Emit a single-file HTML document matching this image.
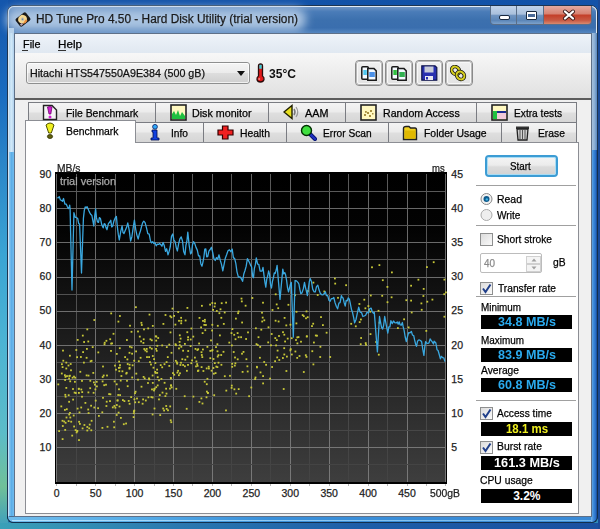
<!DOCTYPE html>
<html><head><meta charset="utf-8">
<style>
*{box-sizing:border-box;margin:0;padding:0}
html,body{width:600px;height:529px;overflow:hidden}
body{position:relative;font-family:"Liberation Sans",sans-serif;font-size:11px;color:#000;
 background:linear-gradient(180deg,#1556ac 0%,#1d66b8 30%,#2f86c4 60%,#3aa0cc 80%,#2a6fa0 100%)}
.a{position:absolute}
.t{white-space:nowrap;line-height:1;-webkit-text-stroke:0.25px currentColor}
</style></head><body>

<div class="a" style="left:0px;top:0px;width:600px;height:529px;background:linear-gradient(180deg,#1252a8 0%,#1860b4 25%,#2a88c4 55%,#3eaad2 75%,#2f8cb8 100%)"></div>
<div class="a" style="left:0px;top:0px;width:8px;height:529px;background:linear-gradient(180deg,#1456ac 0%,#1a6cc0 18%,#2a84c8 30%,#3aa4d4 48%,#4cb4d4 65%,#5cbcc8 82%,#70c098 92%,#3a9cc0 100%)"></div>
<div class="a" style="left:0px;top:523px;width:600px;height:6px;background:linear-gradient(90deg,#3aa0b8 0%,#2a78b0 30%,#1d5ea8 60%,#1a50a0 100%)"></div>
<div class="a" style="left:598px;top:0px;width:2px;height:529px;background:#1a4a98"></div>
<div class="a" style="left:7px;top:5px;width:591px;height:518px;border-radius:7px;border:1px solid #1e3550;background:linear-gradient(180deg,#b8cfe8 0%,#a8c2e0 6%,#a4c4e4 20%,#80b8ea 40%,#5eaeea 100%)"></div>
<div class="a" style="left:8px;top:6px;width:589px;height:516px;border-radius:6px;border:1px solid rgba(255,255,255,0.6);border-bottom-color:rgba(255,255,255,0.3)"></div>
<div class="a" style="left:9px;top:33px;width:5px;height:119px;background:linear-gradient(90deg,#b8d8f0,#d0e8f8 50%,#b0d0ec)"></div>
<div class="a" style="left:9px;top:152px;width:5px;height:364px;background:linear-gradient(90deg,#8cc8f0,#5caee8 50%,#70bcee)"></div>
<div class="a" style="left:591px;top:33px;width:6px;height:117px;background:linear-gradient(90deg,#b0c8e0,#8aaed4 60%,#5a88c0)"></div>
<div class="a" style="left:7px;top:516px;width:585px;height:7px;border-radius:0 0 0 6px;border:1px solid #12304e;border-top:none;border-right:none;background:linear-gradient(90deg,#70bcec 0%,#58aee8 20%,#3a90da 45%,#3a8ad6 100%)"></div>
<div class="a" style="left:12px;top:520px;width:580px;height:1px;background:linear-gradient(90deg,rgba(200,235,255,0.8),rgba(150,210,245,0.6))"></div>
<div class="a" style="left:9px;top:516px;width:583px;height:1px;background:#4a6c8e"></div>
<div class="a" style="left:591px;top:150px;width:7px;height:373px;background:linear-gradient(90deg,#7ab4e8,#3a88d8 45%,#2a70c8 75%,#1a4890);border-radius:0 0 6px 0;border-right:1px solid #12304e;border-bottom:1px solid #12304e"></div>
<div class="a" style="left:9px;top:7px;width:587px;height:26px;border-radius:5px 5px 0 0;background:linear-gradient(180deg,#6e94c4 0%,#4a7cb8 18%,#3c70ae 50%,#3a6eae 80%,#5486c0 100%)"></div>
<div class="a" style="left:6px;top:8px;width:300px;height:23px;border-radius:11px;background:rgba(176,200,228,0.95);filter:blur(5px)"></div>
<div class="a" style="left:9px;top:28px;width:5px;height:5px;background:#b8d2ea"></div>
<svg class="a" style="left:14px;top:11px;" width="18" height="17" viewBox="0 0 18 17"><g transform="rotate(-38 9 8.5)"><rect x="2.5" y="3.5" width="13" height="10" rx="1.8" fill="#1a1a1a"/><ellipse cx="8.8" cy="8" rx="4.6" ry="4.2" fill="#f6d890"/><circle cx="8.8" cy="8" r="1.8" fill="#c8c0a8"/><circle cx="8.8" cy="8" r="0.8" fill="#6a88a8"/><path d="M6 12 Q9 13.5 12 12 L11 10 Z" fill="#f09040"/><rect x="3.5" y="10.5" width="2.5" height="2" fill="#b8a0b0"/></g></svg>
<div class="a t" style="left:35.50px;top:13.44px;font-size:12px;color:#1b1b1b;transform:scaleX(0.9896);transform-origin:0 0;">HD Tune Pro 4.50 - Hard Disk Utility (trial version)</div>
<div class="a" style="left:490px;top:6px;width:102px;height:19px;border:1px solid #5a6e88;border-top:none;border-radius:0 0 4px 4px;overflow:hidden"><div class="a" style="left:0;top:0;width:26px;height:18px;background:linear-gradient(180deg,#c2d4ea 0%,#aac0dc 45%,#7094c0 52%,#5c86b8 80%,#7ea2cc 100%);border-right:1px solid #5a6e88"></div><div class="a" style="left:26px;top:0;width:27px;height:18px;background:linear-gradient(180deg,#c2d4ea 0%,#aac0dc 45%,#7094c0 52%,#5c86b8 80%,#7ea2cc 100%);border-right:1px solid #5a6e88"></div><div class="a" style="left:53px;top:0;width:47px;height:18px;background:linear-gradient(180deg,#e4aaa0 0%,#d88474 42%,#c4402a 52%,#c85a44 80%,#d88a70 100%)"></div></div>
<div class="a" style="left:499px;top:15px;width:11px;height:5px;background:#fff;border:1px solid #1a2a40;border-radius:2px"></div>
<div class="a" style="left:526px;top:11px;width:11px;height:9px;border:1px solid #1a2a40;background:#fff;border-radius:1px"></div>
<div class="a" style="left:528px;top:14px;width:7px;height:3px;background:#4a6a98"></div>
<svg class="a" style="left:562px;top:9px;" width="14" height="12" viewBox="0 0 14 12"><path d="M3 2.5 L11 9.5 M11 2.5 L3 9.5" stroke="#3a1a1a" stroke-width="4" stroke-linecap="round"/><path d="M3 2.5 L11 9.5 M11 2.5 L3 9.5" stroke="#fff" stroke-width="2.3" stroke-linecap="round"/></svg>
<div class="a" style="left:14px;top:33px;width:578px;height:484px;background:#f0f0f0;border:1px solid #5e7088"></div>
<div class="a" style="left:15px;top:34px;width:576px;height:19px;background:linear-gradient(180deg,#eef3f9,#e0e8f1)"></div>
<div class="a" style="left:15px;top:53px;width:576px;height:45px;background:linear-gradient(180deg,#f7f7f7,#e0e0e0)"></div>
<div class="a" style="left:15px;top:98px;width:576px;height:2px;background:#5c5c5c"></div>
<div class="a" style="left:15px;top:100px;width:576px;height:416px;background:#f0f0f0"></div>
<div class="a t" style="left:22.50px;top:38.99px;font-size:11px;color:#000;transform:scaleX(0.9873);transform-origin:0 0;">File</div>
<div class="a" style="left:22px;top:50px;width:6px;height:1px;background:#333"></div>
<div class="a t" style="left:58.30px;top:38.99px;font-size:11px;color:#000;transform:scaleX(1.0608);transform-origin:0 0;">Help</div>
<div class="a" style="left:58px;top:50px;width:8px;height:1px;background:#333"></div>
<div class="a" style="left:26px;top:62px;width:224px;height:22px;border:1px solid #8e8f8f;border-radius:3px;background:linear-gradient(180deg,#f4f4f4 0%,#ebebeb 50%,#dddddd 51%,#cfcfcf 100%)"></div>
<div class="a" style="left:27px;top:63px;width:222px;height:20px;border:1px solid rgba(255,255,255,0.7);border-radius:2px"></div>
<div class="a t" style="left:30.00px;top:68.09px;font-size:11px;color:#111;transform:scaleX(0.9734);transform-origin:0 0;">Hitachi HTS547550A9E384 (500 gB)</div>
<svg class="a" style="left:237px;top:71px;" width="9" height="5" viewBox="0 0 9 5"><path d="M0 0 H8 L4 5 Z" fill="#111"/></svg>
<svg class="a" style="left:254px;top:63px;" width="13" height="20" viewBox="0 0 13 20"><path d="M4.5 3 Q4.5 1 6.5 1 Q8.5 1 8.5 3 V13 Q10.5 14.5 10 16.5 Q9.3 19 6.5 19 Q3.5 19 3 16.5 Q2.6 14.5 4.5 13 Z" fill="#e01818" stroke="#2a0a0a" stroke-width="1.3"/><rect x="5.3" y="1.8" width="2.4" height="4" fill="#38d0d8"/><circle cx="5.2" cy="16" r="1" fill="#f08080"/></svg>
<div class="a t" style="left:269.00px;top:68.44px;font-size:12px;font-weight:bold;-webkit-text-stroke:0;color:#111;transform:scaleX(1.0070);transform-origin:0 0;">35°C</div>
<div class="a" style="left:355px;top:60px;width:28px;height:26px;border:1px solid #8a8a8a;border-radius:4px;background:linear-gradient(180deg,#f0f0f0,#e2e2e2)"></div>
<div class="a" style="left:356px;top:61px;width:26px;height:24px;border:1px solid #b8b8b8;border-radius:3px"></div>
<div class="a" style="left:357px;top:62px;width:24px;height:22px;border:1px solid #f8f8f8;border-radius:2px"></div>
<svg class="a" style="left:361px;top:66px;" width="17" height="17" viewBox="0 0 17 17"><rect x="0.8" y="0.8" width="6.5" height="12.5" rx="1" fill="#f4faff" stroke="#1a1a1a" stroke-width="1.5"/><rect x="2.3" y="4" width="3.5" height="5" fill="#50c8f0"/><path d="M6.8 2.6 H13 L15.2 4.8 V14.2 H6.8 Z" fill="#f4faff" stroke="#1a1a1a" stroke-width="1.5"/><rect x="8.3" y="6" width="5.5" height="5" fill="#4a90e8"/></svg>
<div class="a" style="left:385px;top:60px;width:28px;height:26px;border:1px solid #8a8a8a;border-radius:4px;background:linear-gradient(180deg,#f0f0f0,#e2e2e2)"></div>
<div class="a" style="left:386px;top:61px;width:26px;height:24px;border:1px solid #b8b8b8;border-radius:3px"></div>
<div class="a" style="left:387px;top:62px;width:24px;height:22px;border:1px solid #f8f8f8;border-radius:2px"></div>
<svg class="a" style="left:391px;top:66px;" width="17" height="17" viewBox="0 0 17 17"><rect x="0.8" y="0.8" width="6.5" height="12.5" rx="1" fill="#f4faff" stroke="#1a1a1a" stroke-width="1.5"/><rect x="2.3" y="4" width="3.5" height="5" fill="#30c040"/><path d="M6.8 2.6 H13 L15.2 4.8 V14.2 H6.8 Z" fill="#f4faff" stroke="#1a1a1a" stroke-width="1.5"/><rect x="8.3" y="6" width="5.5" height="5" fill="#30b050"/></svg>
<div class="a" style="left:415px;top:60px;width:28px;height:26px;border:1px solid #8a8a8a;border-radius:4px;background:linear-gradient(180deg,#f0f0f0,#e2e2e2)"></div>
<div class="a" style="left:416px;top:61px;width:26px;height:24px;border:1px solid #b8b8b8;border-radius:3px"></div>
<div class="a" style="left:417px;top:62px;width:24px;height:22px;border:1px solid #f8f8f8;border-radius:2px"></div>
<svg class="a" style="left:421px;top:65px;" width="17" height="17" viewBox="0 0 17 17"><path d="M0.8 0.8 H14 L15.8 2.6 V15.2 H0.8 Z" fill="#2830b0" stroke="#10164a" stroke-width="1.2"/><rect x="3.5" y="1.5" width="9" height="6" fill="#c8ccd8"/><rect x="4" y="11" width="8" height="4" fill="#e8e8f0"/><rect x="5" y="12" width="2" height="2.5" fill="#2830b0"/></svg>
<div class="a" style="left:445px;top:60px;width:28px;height:26px;border:1px solid #8a8a8a;border-radius:4px;background:linear-gradient(180deg,#f0f0f0,#e2e2e2)"></div>
<div class="a" style="left:446px;top:61px;width:26px;height:24px;border:1px solid #b8b8b8;border-radius:3px"></div>
<div class="a" style="left:447px;top:62px;width:24px;height:22px;border:1px solid #f8f8f8;border-radius:2px"></div>
<svg class="a" style="left:450px;top:65px;" width="17" height="17" viewBox="0 0 17 17"><g transform="rotate(-45 8 8)"><ellipse cx="8" cy="4.5" rx="3.6" ry="4.2" fill="none" stroke="#1a1a10" stroke-width="3.6"/><ellipse cx="8" cy="4.5" rx="3.6" ry="4.2" fill="none" stroke="#d8d020" stroke-width="2"/><ellipse cx="8" cy="11.5" rx="3.6" ry="4.2" fill="none" stroke="#1a1a10" stroke-width="3.6"/><ellipse cx="8" cy="11.5" rx="3.6" ry="4.2" fill="none" stroke="#d8d020" stroke-width="2"/></g></svg>
<div class="a" style="left:28px;top:102px;width:128px;height:21px;background:linear-gradient(180deg,#f4f4f4 0%,#ececec 45%,#dedede 55%,#d6d6d6 100%);border:1px solid #7a7c82;"></div>
<div class="a" style="left:155px;top:102px;width:114px;height:21px;background:linear-gradient(180deg,#f4f4f4 0%,#ececec 45%,#dedede 55%,#d6d6d6 100%);border:1px solid #7a7c82;"></div>
<div class="a" style="left:268px;top:102px;width:78px;height:21px;background:linear-gradient(180deg,#f4f4f4 0%,#ececec 45%,#dedede 55%,#d6d6d6 100%);border:1px solid #7a7c82;"></div>
<div class="a" style="left:345px;top:102px;width:132px;height:21px;background:linear-gradient(180deg,#f4f4f4 0%,#ececec 45%,#dedede 55%,#d6d6d6 100%);border:1px solid #7a7c82;"></div>
<div class="a" style="left:476px;top:102px;width:101px;height:21px;background:linear-gradient(180deg,#f4f4f4 0%,#ececec 45%,#dedede 55%,#d6d6d6 100%);border:1px solid #7a7c82;"></div>
<div class="a" style="left:135px;top:122px;width:69px;height:21px;background:linear-gradient(180deg,#f4f4f4 0%,#ececec 45%,#dedede 55%,#d6d6d6 100%);border:1px solid #7a7c82;"></div>
<div class="a" style="left:203px;top:122px;width:84px;height:21px;background:linear-gradient(180deg,#f4f4f4 0%,#ececec 45%,#dedede 55%,#d6d6d6 100%);border:1px solid #7a7c82;"></div>
<div class="a" style="left:286px;top:122px;width:103px;height:21px;background:linear-gradient(180deg,#f4f4f4 0%,#ececec 45%,#dedede 55%,#d6d6d6 100%);border:1px solid #7a7c82;"></div>
<div class="a" style="left:388px;top:122px;width:114px;height:21px;background:linear-gradient(180deg,#f4f4f4 0%,#ececec 45%,#dedede 55%,#d6d6d6 100%);border:1px solid #7a7c82;"></div>
<div class="a" style="left:501px;top:122px;width:76px;height:21px;background:linear-gradient(180deg,#f4f4f4 0%,#ececec 45%,#dedede 55%,#d6d6d6 100%);border:1px solid #7a7c82;"></div>
<div class="a" style="left:25px;top:142px;width:554px;height:372px;background:#fff;border:1px solid #8c8e94"></div>
<div class="a" style="left:25px;top:120px;width:111px;height:23px;background:#fff;border:1px solid #8c8e94;border-bottom:none"></div>
<div class="a t" style="left:65.50px;top:107.99px;font-size:11px;color:#000;transform:scaleX(0.9461);transform-origin:0 0;">File Benchmark</div>
<div class="a t" style="left:192.30px;top:107.99px;font-size:11px;color:#000;transform:scaleX(0.9734);transform-origin:0 0;">Disk monitor</div>
<div class="a t" style="left:305.00px;top:107.99px;font-size:11px;color:#000;transform:scaleX(0.9816);transform-origin:0 0;">AAM</div>
<div class="a t" style="left:383.00px;top:107.99px;font-size:11px;color:#000;transform:scaleX(0.9650);transform-origin:0 0;">Random Access</div>
<div class="a t" style="left:513.50px;top:107.99px;font-size:11px;color:#000;transform:scaleX(0.9257);transform-origin:0 0;">Extra tests</div>
<div class="a t" style="left:65.50px;top:126.19px;font-size:11px;color:#000;transform:scaleX(0.9436);transform-origin:0 0;">Benchmark</div>
<div class="a t" style="left:170.50px;top:127.99px;font-size:11px;color:#000;transform:scaleX(0.9265);transform-origin:0 0;">Info</div>
<div class="a t" style="left:240.00px;top:127.99px;font-size:11px;color:#000;transform:scaleX(0.9435);transform-origin:0 0;">Health</div>
<div class="a t" style="left:323.00px;top:127.99px;font-size:11px;color:#000;transform:scaleX(0.9244);transform-origin:0 0;">Error Scan</div>
<div class="a t" style="left:424.00px;top:127.99px;font-size:11px;color:#000;transform:scaleX(0.9480);transform-origin:0 0;">Folder Usage</div>
<div class="a t" style="left:537.60px;top:127.99px;font-size:11px;color:#000;transform:scaleX(0.9361);transform-origin:0 0;">Erase</div>
<svg class="a" style="left:42px;top:104px;" width="16" height="17" viewBox="0 0 16 17"><path d="M1.5 1.5 H10 L14.5 6 V15.5 H1.5 Z" fill="#f4f4f4" stroke="#222" stroke-width="1.4"/><path d="M5.5 3 Q8 2 10 3 L8.8 10 H7 Z" fill="#d020d0" stroke="#700070" stroke-width="0.8"/><circle cx="8" cy="13" r="1.5" fill="#d020d0"/></svg>
<svg class="a" style="left:45px;top:122px;" width="10" height="18" viewBox="0 0 10 18"><path d="M1 3 Q5 -1 9 3 L6.3 11 H3.7 Z" fill="#f0f020" stroke="#505000" stroke-width="1"/><ellipse cx="5" cy="14.5" rx="2.6" ry="2" fill="#606010" stroke="#303000" stroke-width="0.8"/></svg>
<svg class="a" style="left:170px;top:104px;" width="17" height="17" viewBox="0 0 17 17"><rect x="1" y="1" width="15" height="15" fill="#fff8c0" stroke="#222" stroke-width="1.6"/><path d="M2 15 V10 L4 7 L6 11 L8 6 L10 12 L12 8 L15 12 V15 Z" fill="#20c040"/></svg>
<svg class="a" style="left:150px;top:124px;" width="10" height="17" viewBox="0 0 10 17"><circle cx="5" cy="2.8" r="2.4" fill="#30a8f8" stroke="#001860" stroke-width="0.8"/><path d="M2 6 H7 V14 H9 V16 H1 V14 H3 V8 H2 Z" fill="#1040e0" stroke="#001050" stroke-width="0.8"/></svg>
<svg class="a" style="left:217px;top:125px;" width="17" height="15" viewBox="0 0 17 15"><path d="M5.5 1 H11 V5 H16 V10 H11 V14 H5.5 V10 H1 V5 H5.5 Z" fill="#f02020" stroke="#300000" stroke-width="1.2"/></svg>
<svg class="a" style="left:283px;top:104px;" width="17" height="16" viewBox="0 0 17 16"><path d="M1 8 L9 1.5 V14.5 Z" fill="#e8e020" stroke="#202000" stroke-width="1.4"/><path d="M11 5 Q13 8 11 11" stroke="#777" stroke-width="1.5" fill="none"/><path d="M13 3 Q16.5 8 13 13" stroke="#999" stroke-width="1.2" fill="none"/></svg>
<svg class="a" style="left:300px;top:124px;" width="17" height="17" viewBox="0 0 17 17"><path d="M9 9 L15 15" stroke="#001070" stroke-width="4" stroke-linecap="round"/><path d="M9 9 L15 15" stroke="#2030c0" stroke-width="2.4" stroke-linecap="round"/><circle cx="6.5" cy="6.5" r="5" fill="#40e040" stroke="#003000" stroke-width="1.4"/></svg>
<svg class="a" style="left:360px;top:104px;" width="17" height="17" viewBox="0 0 17 17"><rect x="1" y="1" width="15" height="15" fill="#fff8c0" stroke="#222" stroke-width="1.6"/><g fill="#a89040"><rect x="4" y="10" width="2" height="2"/><rect x="7" y="8" width="2" height="2"/><rect x="10" y="6" width="2" height="2"/><rect x="5" y="7" width="1.8" height="1.8"/><rect x="9" y="11" width="2" height="2"/><rect x="12" y="9" width="1.5" height="1.5"/></g></svg>
<svg class="a" style="left:402px;top:125px;" width="16" height="16" viewBox="0 0 16 16"><path d="M1.5 3.5 Q1.5 1.5 4 1.5 H7 L8.5 3 H13 Q14.5 3 14.5 5 V14.5 H1.5 Z" fill="#f0d020" stroke="#222" stroke-width="1.4"/><rect x="3" y="5.5" width="10" height="8" fill="#e0b800"/></svg>
<svg class="a" style="left:491px;top:104px;" width="17" height="17" viewBox="0 0 17 17"><rect x="1" y="1" width="15" height="15" fill="#fff8c0" stroke="#222" stroke-width="1.6"/><rect x="2" y="7" width="4" height="8" fill="#20c040"/><rect x="6" y="7" width="9" height="2" fill="#1a2a90"/><rect x="6" y="9" width="9" height="6" fill="#f0c8d8"/></svg>
<svg class="a" style="left:515px;top:125px;" width="15" height="16" viewBox="0 0 15 16"><path d="M1 1.5 H14 V4 H1 Z" fill="#333"/><path d="M2 4 H13 L12 15 H3 Z" fill="#cfcfcf" stroke="#222" stroke-width="1.3"/><path d="M5 5 V14 M7.5 5 V14 M10 5 V14" stroke="#555" stroke-width="1"/></svg>
<svg class="a" style="left:0px;top:0px;" width="600" height="529" viewBox="0 0 600 529"><defs><linearGradient id="bg" x1="0" y1="0" x2="0" y2="1"><stop offset="0" stop-color="#000"/><stop offset="0.18" stop-color="#030303"/><stop offset="1" stop-color="#3e3e3e"/></linearGradient></defs><rect x="55" y="172" width="392" height="312" fill="#000"/><rect x="57" y="174" width="389" height="308" fill="url(#bg)"/><defs><linearGradient id="gmin" gradientUnits="userSpaceOnUse" x1="0" y1="174" x2="0" y2="482"><stop offset="0" stop-color="#5a5a5a"/><stop offset="1" stop-color="#434343"/></linearGradient><linearGradient id="gmaj" gradientUnits="userSpaceOnUse" x1="0" y1="174" x2="0" y2="482"><stop offset="0" stop-color="#666"/><stop offset="1" stop-color="#787878"/></linearGradient></defs><line x1="56.5" y1="174" x2="56.5" y2="482" stroke="url(#gmaj)" stroke-width="1"/><line x1="76.5" y1="174" x2="76.5" y2="482" stroke="url(#gmin)" stroke-width="1"/><line x1="95.5" y1="174" x2="95.5" y2="482" stroke="url(#gmaj)" stroke-width="1"/><line x1="115.5" y1="174" x2="115.5" y2="482" stroke="url(#gmin)" stroke-width="1"/><line x1="134.5" y1="174" x2="134.5" y2="482" stroke="url(#gmaj)" stroke-width="1"/><line x1="154.5" y1="174" x2="154.5" y2="482" stroke="url(#gmin)" stroke-width="1"/><line x1="173.5" y1="174" x2="173.5" y2="482" stroke="url(#gmaj)" stroke-width="1"/><line x1="192.5" y1="174" x2="192.5" y2="482" stroke="url(#gmin)" stroke-width="1"/><line x1="212.5" y1="174" x2="212.5" y2="482" stroke="url(#gmaj)" stroke-width="1"/><line x1="231.5" y1="174" x2="231.5" y2="482" stroke="url(#gmin)" stroke-width="1"/><line x1="251.5" y1="174" x2="251.5" y2="482" stroke="url(#gmaj)" stroke-width="1"/><line x1="270.5" y1="174" x2="270.5" y2="482" stroke="url(#gmin)" stroke-width="1"/><line x1="290.5" y1="174" x2="290.5" y2="482" stroke="url(#gmaj)" stroke-width="1"/><line x1="309.5" y1="174" x2="309.5" y2="482" stroke="url(#gmin)" stroke-width="1"/><line x1="329.5" y1="174" x2="329.5" y2="482" stroke="url(#gmaj)" stroke-width="1"/><line x1="348.5" y1="174" x2="348.5" y2="482" stroke="url(#gmin)" stroke-width="1"/><line x1="368.5" y1="174" x2="368.5" y2="482" stroke="url(#gmaj)" stroke-width="1"/><line x1="387.5" y1="174" x2="387.5" y2="482" stroke="url(#gmin)" stroke-width="1"/><line x1="407.5" y1="174" x2="407.5" y2="482" stroke="url(#gmaj)" stroke-width="1"/><line x1="426.5" y1="174" x2="426.5" y2="482" stroke="url(#gmin)" stroke-width="1"/><line x1="445.5" y1="174" x2="445.5" y2="482" stroke="url(#gmaj)" stroke-width="1"/><line x1="57" y1="464.5" x2="445" y2="464.5" stroke="#444444" stroke-width="1"/><line x1="57" y1="447.5" x2="445" y2="447.5" stroke="#767676" stroke-width="1"/><line x1="57" y1="430.5" x2="445" y2="430.5" stroke="#474747" stroke-width="1"/><line x1="57" y1="413.5" x2="445" y2="413.5" stroke="#747474" stroke-width="1"/><line x1="57" y1="396.5" x2="445" y2="396.5" stroke="#494949" stroke-width="1"/><line x1="57" y1="379.5" x2="445" y2="379.5" stroke="#727272" stroke-width="1"/><line x1="57" y1="362.5" x2="445" y2="362.5" stroke="#4c4c4c" stroke-width="1"/><line x1="57" y1="345.5" x2="445" y2="345.5" stroke="#707070" stroke-width="1"/><line x1="57" y1="328.5" x2="445" y2="328.5" stroke="#4e4e4e" stroke-width="1"/><line x1="57" y1="311.5" x2="445" y2="311.5" stroke="#6e6e6e" stroke-width="1"/><line x1="57" y1="294.5" x2="445" y2="294.5" stroke="#515151" stroke-width="1"/><line x1="57" y1="277.5" x2="445" y2="277.5" stroke="#6c6c6c" stroke-width="1"/><line x1="57" y1="259.5" x2="445" y2="259.5" stroke="#545454" stroke-width="1"/><line x1="57" y1="242.5" x2="445" y2="242.5" stroke="#6a6a6a" stroke-width="1"/><line x1="57" y1="225.5" x2="445" y2="225.5" stroke="#565656" stroke-width="1"/><line x1="57" y1="208.5" x2="445" y2="208.5" stroke="#686868" stroke-width="1"/><line x1="57" y1="191.5" x2="445" y2="191.5" stroke="#595959" stroke-width="1"/><line x1="56.5" y1="484" x2="56.5" y2="486" stroke="#b8b8b8" stroke-width="1"/><line x1="76.5" y1="484" x2="76.5" y2="486" stroke="#b8b8b8" stroke-width="1"/><line x1="95.5" y1="484" x2="95.5" y2="486" stroke="#b8b8b8" stroke-width="1"/><line x1="115.5" y1="484" x2="115.5" y2="486" stroke="#b8b8b8" stroke-width="1"/><line x1="134.5" y1="484" x2="134.5" y2="486" stroke="#b8b8b8" stroke-width="1"/><line x1="154.5" y1="484" x2="154.5" y2="486" stroke="#b8b8b8" stroke-width="1"/><line x1="173.5" y1="484" x2="173.5" y2="486" stroke="#b8b8b8" stroke-width="1"/><line x1="192.5" y1="484" x2="192.5" y2="486" stroke="#b8b8b8" stroke-width="1"/><line x1="212.5" y1="484" x2="212.5" y2="486" stroke="#b8b8b8" stroke-width="1"/><line x1="231.5" y1="484" x2="231.5" y2="486" stroke="#b8b8b8" stroke-width="1"/><line x1="251.5" y1="484" x2="251.5" y2="486" stroke="#b8b8b8" stroke-width="1"/><line x1="270.5" y1="484" x2="270.5" y2="486" stroke="#b8b8b8" stroke-width="1"/><line x1="290.5" y1="484" x2="290.5" y2="486" stroke="#b8b8b8" stroke-width="1"/><line x1="309.5" y1="484" x2="309.5" y2="486" stroke="#b8b8b8" stroke-width="1"/><line x1="329.5" y1="484" x2="329.5" y2="486" stroke="#b8b8b8" stroke-width="1"/><line x1="348.5" y1="484" x2="348.5" y2="486" stroke="#b8b8b8" stroke-width="1"/><line x1="368.5" y1="484" x2="368.5" y2="486" stroke="#b8b8b8" stroke-width="1"/><line x1="387.5" y1="484" x2="387.5" y2="486" stroke="#b8b8b8" stroke-width="1"/><line x1="407.5" y1="484" x2="407.5" y2="486" stroke="#b8b8b8" stroke-width="1"/><line x1="426.5" y1="484" x2="426.5" y2="486" stroke="#b8b8b8" stroke-width="1"/><line x1="445.5" y1="484" x2="445.5" y2="486" stroke="#b8b8b8" stroke-width="1"/><g fill="#c8c838"><rect x="232.8" y="351.1" width="1.8" height="1.8"/><rect x="285.4" y="324.5" width="1.8" height="1.8"/><rect x="93.4" y="319.1" width="1.8" height="1.8"/><rect x="296.3" y="357.0" width="1.8" height="1.8"/><rect x="150.9" y="347.8" width="1.8" height="1.8"/><rect x="146.1" y="356.2" width="1.8" height="1.8"/><rect x="386.5" y="286.0" width="1.8" height="1.8"/><rect x="211.4" y="323.9" width="1.8" height="1.8"/><rect x="90.7" y="359.9" width="1.8" height="1.8"/><rect x="152.6" y="366.8" width="1.8" height="1.8"/><rect x="230.9" y="384.7" width="1.8" height="1.8"/><rect x="102.1" y="365.6" width="1.8" height="1.8"/><rect x="175.1" y="344.3" width="1.8" height="1.8"/><rect x="95.8" y="380.9" width="1.8" height="1.8"/><rect x="172.1" y="372.2" width="1.8" height="1.8"/><rect x="201.4" y="356.2" width="1.8" height="1.8"/><rect x="116.7" y="399.4" width="1.8" height="1.8"/><rect x="133.3" y="359.8" width="1.8" height="1.8"/><rect x="97.2" y="407.3" width="1.8" height="1.8"/><rect x="156.8" y="384.5" width="1.8" height="1.8"/><rect x="337.1" y="296.9" width="1.8" height="1.8"/><rect x="165.8" y="408.0" width="1.8" height="1.8"/><rect x="80.3" y="406.6" width="1.8" height="1.8"/><rect x="284.2" y="340.6" width="1.8" height="1.8"/><rect x="431.5" y="298.7" width="1.8" height="1.8"/><rect x="86.0" y="348.0" width="1.8" height="1.8"/><rect x="205.6" y="396.4" width="1.8" height="1.8"/><rect x="89.4" y="379.9" width="1.8" height="1.8"/><rect x="156.3" y="372.0" width="1.8" height="1.8"/><rect x="184.0" y="343.0" width="1.8" height="1.8"/><rect x="283.7" y="317.0" width="1.8" height="1.8"/><rect x="164.5" y="395.2" width="1.8" height="1.8"/><rect x="179.5" y="364.1" width="1.8" height="1.8"/><rect x="69.0" y="374.8" width="1.8" height="1.8"/><rect x="364.8" y="342.2" width="1.8" height="1.8"/><rect x="149.1" y="361.2" width="1.8" height="1.8"/><rect x="134.3" y="401.4" width="1.8" height="1.8"/><rect x="126.5" y="358.5" width="1.8" height="1.8"/><rect x="90.7" y="419.9" width="1.8" height="1.8"/><rect x="203.4" y="324.0" width="1.8" height="1.8"/><rect x="237.2" y="312.3" width="1.8" height="1.8"/><rect x="192.4" y="335.7" width="1.8" height="1.8"/><rect x="67.8" y="394.3" width="1.8" height="1.8"/><rect x="363.4" y="298.8" width="1.8" height="1.8"/><rect x="90.2" y="404.8" width="1.8" height="1.8"/><rect x="178.1" y="319.9" width="1.8" height="1.8"/><rect x="135.0" y="306.3" width="1.8" height="1.8"/><rect x="257.6" y="336.3" width="1.8" height="1.8"/><rect x="325.7" y="331.8" width="1.8" height="1.8"/><rect x="240.9" y="300.5" width="1.8" height="1.8"/><rect x="180.2" y="316.9" width="1.8" height="1.8"/><rect x="360.0" y="318.6" width="1.8" height="1.8"/><rect x="195.1" y="365.5" width="1.8" height="1.8"/><rect x="154.3" y="371.0" width="1.8" height="1.8"/><rect x="217.6" y="361.8" width="1.8" height="1.8"/><rect x="147.3" y="327.5" width="1.8" height="1.8"/><rect x="141.7" y="402.8" width="1.8" height="1.8"/><rect x="94.5" y="388.5" width="1.8" height="1.8"/><rect x="323.4" y="290.6" width="1.8" height="1.8"/><rect x="101.7" y="380.5" width="1.8" height="1.8"/><rect x="130.3" y="396.2" width="1.8" height="1.8"/><rect x="278.1" y="335.1" width="1.8" height="1.8"/><rect x="417.5" y="278.8" width="1.8" height="1.8"/><rect x="184.0" y="365.4" width="1.8" height="1.8"/><rect x="61.9" y="425.1" width="1.8" height="1.8"/><rect x="132.7" y="416.2" width="1.8" height="1.8"/><rect x="214.2" y="302.5" width="1.8" height="1.8"/><rect x="157.3" y="337.1" width="1.8" height="1.8"/><rect x="214.7" y="372.2" width="1.8" height="1.8"/><rect x="147.1" y="382.1" width="1.8" height="1.8"/><rect x="65.6" y="416.6" width="1.8" height="1.8"/><rect x="76.4" y="430.0" width="1.8" height="1.8"/><rect x="270.8" y="333.1" width="1.8" height="1.8"/><rect x="86.4" y="429.6" width="1.8" height="1.8"/><rect x="119.0" y="315.1" width="1.8" height="1.8"/><rect x="220.5" y="363.9" width="1.8" height="1.8"/><rect x="167.1" y="409.4" width="1.8" height="1.8"/><rect x="76.3" y="430.4" width="1.8" height="1.8"/><rect x="223.9" y="375.3" width="1.8" height="1.8"/><rect x="101.5" y="427.0" width="1.8" height="1.8"/><rect x="105.1" y="383.8" width="1.8" height="1.8"/><rect x="283.4" y="333.8" width="1.8" height="1.8"/><rect x="149.5" y="338.4" width="1.8" height="1.8"/><rect x="196.5" y="349.1" width="1.8" height="1.8"/><rect x="130.6" y="330.9" width="1.8" height="1.8"/><rect x="72.1" y="388.1" width="1.8" height="1.8"/><rect x="267.6" y="326.4" width="1.8" height="1.8"/><rect x="202.0" y="348.6" width="1.8" height="1.8"/><rect x="85.7" y="374.5" width="1.8" height="1.8"/><rect x="139.7" y="356.9" width="1.8" height="1.8"/><rect x="200.5" y="397.5" width="1.8" height="1.8"/><rect x="276.3" y="356.5" width="1.8" height="1.8"/><rect x="86.4" y="426.1" width="1.8" height="1.8"/><rect x="166.9" y="356.2" width="1.8" height="1.8"/><rect x="180.4" y="319.9" width="1.8" height="1.8"/><rect x="197.5" y="369.6" width="1.8" height="1.8"/><rect x="275.8" y="303.5" width="1.8" height="1.8"/><rect x="65.4" y="387.0" width="1.8" height="1.8"/><rect x="81.7" y="427.5" width="1.8" height="1.8"/><rect x="89.7" y="360.4" width="1.8" height="1.8"/><rect x="142.5" y="342.0" width="1.8" height="1.8"/><rect x="220.8" y="302.3" width="1.8" height="1.8"/><rect x="122.0" y="399.2" width="1.8" height="1.8"/><rect x="101.4" y="411.4" width="1.8" height="1.8"/><rect x="235.3" y="392.7" width="1.8" height="1.8"/><rect x="128.6" y="351.9" width="1.8" height="1.8"/><rect x="128.7" y="366.9" width="1.8" height="1.8"/><rect x="158.1" y="379.4" width="1.8" height="1.8"/><rect x="142.8" y="338.4" width="1.8" height="1.8"/><rect x="262.1" y="301.8" width="1.8" height="1.8"/><rect x="61.0" y="363.3" width="1.8" height="1.8"/><rect x="118.0" y="367.0" width="1.8" height="1.8"/><rect x="160.5" y="378.0" width="1.8" height="1.8"/><rect x="88.8" y="423.7" width="1.8" height="1.8"/><rect x="174.9" y="359.9" width="1.8" height="1.8"/><rect x="137.9" y="401.3" width="1.8" height="1.8"/><rect x="178.0" y="374.3" width="1.8" height="1.8"/><rect x="196.7" y="365.0" width="1.8" height="1.8"/><rect x="61.6" y="419.9" width="1.8" height="1.8"/><rect x="235.0" y="317.7" width="1.8" height="1.8"/><rect x="296.5" y="342.5" width="1.8" height="1.8"/><rect x="209.4" y="357.3" width="1.8" height="1.8"/><rect x="378.6" y="321.8" width="1.8" height="1.8"/><rect x="126.8" y="363.1" width="1.8" height="1.8"/><rect x="144.9" y="399.6" width="1.8" height="1.8"/><rect x="222.9" y="323.0" width="1.8" height="1.8"/><rect x="207.0" y="392.0" width="1.8" height="1.8"/><rect x="64.0" y="409.0" width="1.8" height="1.8"/><rect x="118.4" y="370.3" width="1.8" height="1.8"/><rect x="251.5" y="297.1" width="1.8" height="1.8"/><rect x="133.5" y="398.4" width="1.8" height="1.8"/><rect x="151.9" y="382.0" width="1.8" height="1.8"/><rect x="197.3" y="348.3" width="1.8" height="1.8"/><rect x="274.8" y="293.4" width="1.8" height="1.8"/><rect x="290.9" y="353.6" width="1.8" height="1.8"/><rect x="150.5" y="396.2" width="1.8" height="1.8"/><rect x="86.4" y="328.5" width="1.8" height="1.8"/><rect x="176.5" y="371.7" width="1.8" height="1.8"/><rect x="369.6" y="333.2" width="1.8" height="1.8"/><rect x="278.4" y="359.1" width="1.8" height="1.8"/><rect x="186.0" y="369.9" width="1.8" height="1.8"/><rect x="216.9" y="324.9" width="1.8" height="1.8"/><rect x="215.9" y="310.1" width="1.8" height="1.8"/><rect x="261.1" y="311.8" width="1.8" height="1.8"/><rect x="175.4" y="387.9" width="1.8" height="1.8"/><rect x="211.2" y="349.7" width="1.8" height="1.8"/><rect x="176.0" y="361.4" width="1.8" height="1.8"/><rect x="143.1" y="328.5" width="1.8" height="1.8"/><rect x="365.1" y="343.9" width="1.8" height="1.8"/><rect x="173.2" y="315.0" width="1.8" height="1.8"/><rect x="195.5" y="360.5" width="1.8" height="1.8"/><rect x="137.1" y="330.6" width="1.8" height="1.8"/><rect x="240.6" y="297.7" width="1.8" height="1.8"/><rect x="302.9" y="371.1" width="1.8" height="1.8"/><rect x="334.3" y="282.7" width="1.8" height="1.8"/><rect x="87.5" y="391.5" width="1.8" height="1.8"/><rect x="148.4" y="378.5" width="1.8" height="1.8"/><rect x="145.9" y="350.6" width="1.8" height="1.8"/><rect x="305.8" y="335.6" width="1.8" height="1.8"/><rect x="263.3" y="361.1" width="1.8" height="1.8"/><rect x="369.4" y="310.8" width="1.8" height="1.8"/><rect x="270.1" y="344.4" width="1.8" height="1.8"/><rect x="126.8" y="385.3" width="1.8" height="1.8"/><rect x="360.2" y="337.1" width="1.8" height="1.8"/><rect x="247.1" y="331.5" width="1.8" height="1.8"/><rect x="115.8" y="383.4" width="1.8" height="1.8"/><rect x="367.5" y="305.2" width="1.8" height="1.8"/><rect x="113.7" y="380.5" width="1.8" height="1.8"/><rect x="159.8" y="364.2" width="1.8" height="1.8"/><rect x="118.9" y="347.3" width="1.8" height="1.8"/><rect x="216.6" y="350.4" width="1.8" height="1.8"/><rect x="113.0" y="420.8" width="1.8" height="1.8"/><rect x="403.2" y="318.4" width="1.8" height="1.8"/><rect x="70.1" y="369.4" width="1.8" height="1.8"/><rect x="155.3" y="339.7" width="1.8" height="1.8"/><rect x="294.5" y="350.6" width="1.8" height="1.8"/><rect x="236.8" y="358.4" width="1.8" height="1.8"/><rect x="140.6" y="385.8" width="1.8" height="1.8"/><rect x="140.2" y="340.5" width="1.8" height="1.8"/><rect x="205.8" y="367.5" width="1.8" height="1.8"/><rect x="64.0" y="374.3" width="1.8" height="1.8"/><rect x="161.3" y="344.5" width="1.8" height="1.8"/><rect x="64.7" y="395.8" width="1.8" height="1.8"/><rect x="78.1" y="439.2" width="1.8" height="1.8"/><rect x="69.1" y="412.0" width="1.8" height="1.8"/><rect x="158.1" y="398.5" width="1.8" height="1.8"/><rect x="165.9" y="346.2" width="1.8" height="1.8"/><rect x="170.4" y="421.3" width="1.8" height="1.8"/><rect x="140.9" y="324.1" width="1.8" height="1.8"/><rect x="148.1" y="377.5" width="1.8" height="1.8"/><rect x="206.0" y="390.7" width="1.8" height="1.8"/><rect x="241.7" y="371.0" width="1.8" height="1.8"/><rect x="189.8" y="338.6" width="1.8" height="1.8"/><rect x="329.3" y="356.1" width="1.8" height="1.8"/><rect x="78.0" y="392.0" width="1.8" height="1.8"/><rect x="155.4" y="335.7" width="1.8" height="1.8"/><rect x="316.8" y="294.1" width="1.8" height="1.8"/><rect x="218.5" y="312.3" width="1.8" height="1.8"/><rect x="410.8" y="311.6" width="1.8" height="1.8"/><rect x="131.7" y="364.4" width="1.8" height="1.8"/><rect x="210.1" y="339.5" width="1.8" height="1.8"/><rect x="178.7" y="341.0" width="1.8" height="1.8"/><rect x="377.6" y="309.9" width="1.8" height="1.8"/><rect x="200.6" y="351.3" width="1.8" height="1.8"/><rect x="153.8" y="387.7" width="1.8" height="1.8"/><rect x="83.5" y="424.1" width="1.8" height="1.8"/><rect x="120.0" y="417.0" width="1.8" height="1.8"/><rect x="209.4" y="350.0" width="1.8" height="1.8"/><rect x="220.4" y="316.9" width="1.8" height="1.8"/><rect x="105.5" y="405.1" width="1.8" height="1.8"/><rect x="62.1" y="349.7" width="1.8" height="1.8"/><rect x="75.7" y="431.5" width="1.8" height="1.8"/><rect x="443.5" y="315.8" width="1.8" height="1.8"/><rect x="202.1" y="320.0" width="1.8" height="1.8"/><rect x="209.2" y="303.7" width="1.8" height="1.8"/><rect x="368.2" y="308.8" width="1.8" height="1.8"/><rect x="246.8" y="370.6" width="1.8" height="1.8"/><rect x="300.1" y="340.8" width="1.8" height="1.8"/><rect x="76.7" y="407.7" width="1.8" height="1.8"/><rect x="127.8" y="400.0" width="1.8" height="1.8"/><rect x="245.2" y="338.1" width="1.8" height="1.8"/><rect x="164.6" y="314.1" width="1.8" height="1.8"/><rect x="125.2" y="422.6" width="1.8" height="1.8"/><rect x="256.9" y="344.2" width="1.8" height="1.8"/><rect x="96.0" y="385.5" width="1.8" height="1.8"/><rect x="65.9" y="408.3" width="1.8" height="1.8"/><rect x="305.1" y="317.4" width="1.8" height="1.8"/><rect x="187.1" y="338.8" width="1.8" height="1.8"/><rect x="125.8" y="371.9" width="1.8" height="1.8"/><rect x="213.7" y="305.6" width="1.8" height="1.8"/><rect x="350.3" y="322.9" width="1.8" height="1.8"/><rect x="142.2" y="398.5" width="1.8" height="1.8"/><rect x="182.2" y="349.8" width="1.8" height="1.8"/><rect x="203.9" y="320.7" width="1.8" height="1.8"/><rect x="277.7" y="320.6" width="1.8" height="1.8"/><rect x="206.5" y="346.0" width="1.8" height="1.8"/><rect x="69.3" y="380.4" width="1.8" height="1.8"/><rect x="115.9" y="353.0" width="1.8" height="1.8"/><rect x="106.1" y="374.6" width="1.8" height="1.8"/><rect x="443.5" y="278.7" width="1.8" height="1.8"/><rect x="133.0" y="410.5" width="1.8" height="1.8"/><rect x="150.9" y="339.4" width="1.8" height="1.8"/><rect x="115.8" y="414.1" width="1.8" height="1.8"/><rect x="381.3" y="294.9" width="1.8" height="1.8"/><rect x="407.7" y="326.5" width="1.8" height="1.8"/><rect x="133.4" y="409.7" width="1.8" height="1.8"/><rect x="301.8" y="314.2" width="1.8" height="1.8"/><rect x="106.6" y="425.9" width="1.8" height="1.8"/><rect x="294.2" y="294.3" width="1.8" height="1.8"/><rect x="197.0" y="370.1" width="1.8" height="1.8"/><rect x="234.5" y="362.4" width="1.8" height="1.8"/><rect x="148.2" y="356.2" width="1.8" height="1.8"/><rect x="231.3" y="365.9" width="1.8" height="1.8"/><rect x="170.8" y="386.5" width="1.8" height="1.8"/><rect x="108.2" y="393.2" width="1.8" height="1.8"/><rect x="269.2" y="377.7" width="1.8" height="1.8"/><rect x="202.5" y="370.1" width="1.8" height="1.8"/><rect x="426.4" y="300.8" width="1.8" height="1.8"/><rect x="237.7" y="336.3" width="1.8" height="1.8"/><rect x="445.0" y="291.5" width="1.8" height="1.8"/><rect x="200.7" y="366.2" width="1.8" height="1.8"/><rect x="358.8" y="321.2" width="1.8" height="1.8"/><rect x="405.4" y="299.3" width="1.8" height="1.8"/><rect x="254.2" y="378.2" width="1.8" height="1.8"/><rect x="256.1" y="366.5" width="1.8" height="1.8"/><rect x="77.9" y="388.0" width="1.8" height="1.8"/><rect x="97.4" y="351.5" width="1.8" height="1.8"/><rect x="60.9" y="372.6" width="1.8" height="1.8"/><rect x="117.7" y="411.7" width="1.8" height="1.8"/><rect x="74.7" y="429.2" width="1.8" height="1.8"/><rect x="184.7" y="319.6" width="1.8" height="1.8"/><rect x="173.3" y="373.8" width="1.8" height="1.8"/><rect x="196.3" y="363.2" width="1.8" height="1.8"/><rect x="262.2" y="382.5" width="1.8" height="1.8"/><rect x="179.1" y="372.4" width="1.8" height="1.8"/><rect x="432.8" y="261.3" width="1.8" height="1.8"/><rect x="289.5" y="323.8" width="1.8" height="1.8"/><rect x="250.4" y="386.6" width="1.8" height="1.8"/><rect x="154.8" y="372.0" width="1.8" height="1.8"/><rect x="213.3" y="394.3" width="1.8" height="1.8"/><rect x="180.3" y="322.4" width="1.8" height="1.8"/><rect x="75.4" y="349.1" width="1.8" height="1.8"/><rect x="65.4" y="361.7" width="1.8" height="1.8"/><rect x="219.6" y="308.4" width="1.8" height="1.8"/><rect x="231.0" y="344.5" width="1.8" height="1.8"/><rect x="101.8" y="376.1" width="1.8" height="1.8"/><rect x="102.8" y="374.6" width="1.8" height="1.8"/><rect x="138.9" y="335.7" width="1.8" height="1.8"/><rect x="69.0" y="354.8" width="1.8" height="1.8"/><rect x="359.8" y="343.3" width="1.8" height="1.8"/><rect x="135.4" y="372.7" width="1.8" height="1.8"/><rect x="208.0" y="367.6" width="1.8" height="1.8"/><rect x="184.4" y="358.8" width="1.8" height="1.8"/><rect x="156.8" y="376.3" width="1.8" height="1.8"/><rect x="225.2" y="301.7" width="1.8" height="1.8"/><rect x="234.1" y="356.6" width="1.8" height="1.8"/><rect x="386.6" y="301.3" width="1.8" height="1.8"/><rect x="186.4" y="331.3" width="1.8" height="1.8"/><rect x="94.8" y="399.7" width="1.8" height="1.8"/><rect x="103.8" y="341.8" width="1.8" height="1.8"/><rect x="170.0" y="384.6" width="1.8" height="1.8"/><rect x="64.7" y="421.9" width="1.8" height="1.8"/><rect x="245.5" y="358.3" width="1.8" height="1.8"/><rect x="119.1" y="364.2" width="1.8" height="1.8"/><rect x="77.9" y="387.8" width="1.8" height="1.8"/><rect x="200.9" y="354.1" width="1.8" height="1.8"/><rect x="192.5" y="395.7" width="1.8" height="1.8"/><rect x="312.5" y="363.5" width="1.8" height="1.8"/><rect x="103.3" y="384.3" width="1.8" height="1.8"/><rect x="83.2" y="341.1" width="1.8" height="1.8"/><rect x="259.6" y="371.5" width="1.8" height="1.8"/><rect x="194.6" y="348.0" width="1.8" height="1.8"/><rect x="87.4" y="340.6" width="1.8" height="1.8"/><rect x="109.3" y="338.3" width="1.8" height="1.8"/><rect x="64.6" y="376.0" width="1.8" height="1.8"/><rect x="90.4" y="429.4" width="1.8" height="1.8"/><rect x="66.1" y="375.2" width="1.8" height="1.8"/><rect x="371.1" y="266.4" width="1.8" height="1.8"/><rect x="215.4" y="365.7" width="1.8" height="1.8"/><rect x="187.3" y="350.1" width="1.8" height="1.8"/><rect x="115.1" y="368.8" width="1.8" height="1.8"/><rect x="311.4" y="350.3" width="1.8" height="1.8"/><rect x="128.6" y="367.8" width="1.8" height="1.8"/><rect x="87.3" y="408.6" width="1.8" height="1.8"/><rect x="201.0" y="304.9" width="1.8" height="1.8"/><rect x="109.5" y="393.4" width="1.8" height="1.8"/><rect x="204.4" y="329.3" width="1.8" height="1.8"/><rect x="375.2" y="341.1" width="1.8" height="1.8"/><rect x="112.6" y="332.9" width="1.8" height="1.8"/><rect x="111.9" y="406.5" width="1.8" height="1.8"/><rect x="233.3" y="333.9" width="1.8" height="1.8"/><rect x="128.7" y="402.9" width="1.8" height="1.8"/><rect x="261.8" y="316.7" width="1.8" height="1.8"/><rect x="425.4" y="330.0" width="1.8" height="1.8"/><rect x="119.2" y="394.2" width="1.8" height="1.8"/><rect x="237.7" y="310.6" width="1.8" height="1.8"/><rect x="212.6" y="358.1" width="1.8" height="1.8"/><rect x="64.4" y="393.9" width="1.8" height="1.8"/><rect x="237.8" y="388.2" width="1.8" height="1.8"/><rect x="297.6" y="336.2" width="1.8" height="1.8"/><rect x="219.0" y="334.5" width="1.8" height="1.8"/><rect x="169.1" y="387.7" width="1.8" height="1.8"/><rect x="118.1" y="388.4" width="1.8" height="1.8"/><rect x="274.4" y="337.2" width="1.8" height="1.8"/><rect x="57.4" y="383.5" width="1.8" height="1.8"/><rect x="91.8" y="346.2" width="1.8" height="1.8"/><rect x="229.1" y="374.9" width="1.8" height="1.8"/><rect x="222.6" y="350.9" width="1.8" height="1.8"/><rect x="169.9" y="377.0" width="1.8" height="1.8"/><rect x="140.5" y="321.9" width="1.8" height="1.8"/><rect x="151.7" y="374.6" width="1.8" height="1.8"/><rect x="81.9" y="334.7" width="1.8" height="1.8"/><rect x="129.1" y="324.8" width="1.8" height="1.8"/><rect x="105.5" y="339.9" width="1.8" height="1.8"/><rect x="248.2" y="395.3" width="1.8" height="1.8"/><rect x="145.8" y="348.0" width="1.8" height="1.8"/><rect x="179.7" y="337.7" width="1.8" height="1.8"/><rect x="186.5" y="307.0" width="1.8" height="1.8"/><rect x="265.2" y="363.9" width="1.8" height="1.8"/><rect x="282.8" y="388.1" width="1.8" height="1.8"/><rect x="215.1" y="346.2" width="1.8" height="1.8"/><rect x="154.5" y="362.1" width="1.8" height="1.8"/><rect x="354.9" y="325.4" width="1.8" height="1.8"/><rect x="225.1" y="409.5" width="1.8" height="1.8"/><rect x="161.6" y="391.7" width="1.8" height="1.8"/><rect x="296.4" y="336.5" width="1.8" height="1.8"/><rect x="63.3" y="420.6" width="1.8" height="1.8"/><rect x="285.5" y="370.1" width="1.8" height="1.8"/><rect x="142.7" y="376.0" width="1.8" height="1.8"/><rect x="231.3" y="362.9" width="1.8" height="1.8"/><rect x="216.8" y="355.7" width="1.8" height="1.8"/><rect x="213.0" y="372.8" width="1.8" height="1.8"/><rect x="311.1" y="325.2" width="1.8" height="1.8"/><rect x="189.7" y="345.2" width="1.8" height="1.8"/><rect x="295.5" y="322.5" width="1.8" height="1.8"/><rect x="80.0" y="356.1" width="1.8" height="1.8"/><rect x="282.1" y="331.3" width="1.8" height="1.8"/><rect x="163.6" y="363.3" width="1.8" height="1.8"/><rect x="314.9" y="334.6" width="1.8" height="1.8"/><rect x="194.0" y="356.7" width="1.8" height="1.8"/><rect x="163.2" y="409.6" width="1.8" height="1.8"/><rect x="312.5" y="281.7" width="1.8" height="1.8"/><rect x="126.0" y="339.1" width="1.8" height="1.8"/><rect x="67.7" y="420.2" width="1.8" height="1.8"/><rect x="241.2" y="321.6" width="1.8" height="1.8"/><rect x="143.4" y="348.1" width="1.8" height="1.8"/><rect x="123.5" y="400.2" width="1.8" height="1.8"/><rect x="198.5" y="401.0" width="1.8" height="1.8"/><rect x="81.1" y="380.0" width="1.8" height="1.8"/><rect x="74.0" y="380.9" width="1.8" height="1.8"/><rect x="81.1" y="395.8" width="1.8" height="1.8"/><rect x="182.2" y="364.1" width="1.8" height="1.8"/><rect x="153.6" y="407.6" width="1.8" height="1.8"/><rect x="161.3" y="366.4" width="1.8" height="1.8"/><rect x="178.1" y="347.5" width="1.8" height="1.8"/><rect x="217.6" y="354.2" width="1.8" height="1.8"/><rect x="65.4" y="367.6" width="1.8" height="1.8"/><rect x="131.2" y="352.8" width="1.8" height="1.8"/><rect x="211.4" y="302.1" width="1.8" height="1.8"/><rect x="381.9" y="279.3" width="1.8" height="1.8"/><rect x="177.3" y="311.1" width="1.8" height="1.8"/><rect x="443.3" y="293.3" width="1.8" height="1.8"/><rect x="124.2" y="356.2" width="1.8" height="1.8"/><rect x="230.7" y="387.0" width="1.8" height="1.8"/><rect x="312.3" y="322.8" width="1.8" height="1.8"/><rect x="274.2" y="360.3" width="1.8" height="1.8"/><rect x="79.0" y="423.0" width="1.8" height="1.8"/><rect x="68.4" y="375.1" width="1.8" height="1.8"/><rect x="420.8" y="308.9" width="1.8" height="1.8"/><rect x="154.9" y="335.4" width="1.8" height="1.8"/><rect x="165.3" y="405.1" width="1.8" height="1.8"/><rect x="149.1" y="346.6" width="1.8" height="1.8"/><rect x="205.9" y="383.3" width="1.8" height="1.8"/><rect x="263.4" y="319.4" width="1.8" height="1.8"/><rect x="114.5" y="406.8" width="1.8" height="1.8"/><rect x="276.7" y="349.7" width="1.8" height="1.8"/><rect x="69.8" y="363.1" width="1.8" height="1.8"/><rect x="76.8" y="339.0" width="1.8" height="1.8"/><rect x="205.0" y="324.1" width="1.8" height="1.8"/><rect x="71.3" y="434.7" width="1.8" height="1.8"/><rect x="306.0" y="335.4" width="1.8" height="1.8"/><rect x="207.8" y="365.8" width="1.8" height="1.8"/><rect x="60.4" y="405.5" width="1.8" height="1.8"/><rect x="422.5" y="295.1" width="1.8" height="1.8"/><rect x="410.2" y="299.7" width="1.8" height="1.8"/><rect x="129.0" y="345.8" width="1.8" height="1.8"/><rect x="213.9" y="362.2" width="1.8" height="1.8"/><rect x="165.6" y="392.7" width="1.8" height="1.8"/><rect x="158.9" y="394.2" width="1.8" height="1.8"/><rect x="134.1" y="392.3" width="1.8" height="1.8"/><rect x="304.9" y="354.3" width="1.8" height="1.8"/><rect x="180.4" y="345.9" width="1.8" height="1.8"/><rect x="115.9" y="404.1" width="1.8" height="1.8"/><rect x="119.8" y="379.7" width="1.8" height="1.8"/><rect x="79.4" y="370.9" width="1.8" height="1.8"/><rect x="201.6" y="402.6" width="1.8" height="1.8"/><rect x="68.3" y="413.6" width="1.8" height="1.8"/><rect x="103.6" y="343.4" width="1.8" height="1.8"/><rect x="168.4" y="365.0" width="1.8" height="1.8"/><rect x="159.3" y="414.2" width="1.8" height="1.8"/><rect x="169.6" y="331.5" width="1.8" height="1.8"/><rect x="211.6" y="349.2" width="1.8" height="1.8"/><rect x="87.7" y="412.2" width="1.8" height="1.8"/><rect x="171.6" y="307.7" width="1.8" height="1.8"/><rect x="244.7" y="304.8" width="1.8" height="1.8"/><rect x="319.5" y="345.9" width="1.8" height="1.8"/><rect x="187.2" y="336.3" width="1.8" height="1.8"/><rect x="74.3" y="376.8" width="1.8" height="1.8"/><rect x="307.1" y="290.1" width="1.8" height="1.8"/><rect x="181.4" y="358.3" width="1.8" height="1.8"/><rect x="111.2" y="342.5" width="1.8" height="1.8"/><rect x="271.6" y="309.1" width="1.8" height="1.8"/><rect x="220.3" y="354.1" width="1.8" height="1.8"/><rect x="94.0" y="383.8" width="1.8" height="1.8"/><rect x="198.6" y="317.0" width="1.8" height="1.8"/><rect x="216.5" y="366.2" width="1.8" height="1.8"/><rect x="207.0" y="392.0" width="1.8" height="1.8"/><rect x="204.0" y="318.9" width="1.8" height="1.8"/><rect x="155.8" y="349.9" width="1.8" height="1.8"/><rect x="135.2" y="350.5" width="1.8" height="1.8"/><rect x="131.3" y="376.6" width="1.8" height="1.8"/><rect x="289.8" y="348.2" width="1.8" height="1.8"/><rect x="105.8" y="400.8" width="1.8" height="1.8"/><rect x="216.5" y="343.3" width="1.8" height="1.8"/><rect x="118.2" y="360.7" width="1.8" height="1.8"/><rect x="377.9" y="353.8" width="1.8" height="1.8"/><rect x="177.2" y="369.9" width="1.8" height="1.8"/><rect x="185.8" y="407.9" width="1.8" height="1.8"/><rect x="93.0" y="381.5" width="1.8" height="1.8"/><rect x="259.3" y="346.0" width="1.8" height="1.8"/><rect x="110.3" y="312.5" width="1.8" height="1.8"/><rect x="118.6" y="405.6" width="1.8" height="1.8"/><rect x="137.9" y="360.3" width="1.8" height="1.8"/><rect x="241.1" y="352.8" width="1.8" height="1.8"/><rect x="234.6" y="338.3" width="1.8" height="1.8"/><rect x="183.8" y="395.3" width="1.8" height="1.8"/><rect x="69.4" y="416.6" width="1.8" height="1.8"/><rect x="200.2" y="326.5" width="1.8" height="1.8"/><rect x="125.4" y="372.7" width="1.8" height="1.8"/><rect x="364.5" y="307.4" width="1.8" height="1.8"/><rect x="174.6" y="343.3" width="1.8" height="1.8"/><rect x="369.9" y="294.6" width="1.8" height="1.8"/><rect x="136.1" y="397.6" width="1.8" height="1.8"/><rect x="170.6" y="351.9" width="1.8" height="1.8"/><rect x="84.5" y="402.0" width="1.8" height="1.8"/><rect x="81.3" y="391.2" width="1.8" height="1.8"/><rect x="170.0" y="377.6" width="1.8" height="1.8"/><rect x="203.8" y="380.8" width="1.8" height="1.8"/><rect x="68.2" y="377.6" width="1.8" height="1.8"/><rect x="261.3" y="320.6" width="1.8" height="1.8"/><rect x="190.5" y="327.6" width="1.8" height="1.8"/><rect x="390.7" y="296.4" width="1.8" height="1.8"/><rect x="410.2" y="284.8" width="1.8" height="1.8"/><rect x="275.9" y="339.2" width="1.8" height="1.8"/><rect x="176.3" y="362.8" width="1.8" height="1.8"/><rect x="88.3" y="427.4" width="1.8" height="1.8"/><rect x="262.2" y="375.2" width="1.8" height="1.8"/><rect x="420.5" y="302.5" width="1.8" height="1.8"/><rect x="186.6" y="355.8" width="1.8" height="1.8"/><rect x="151.9" y="355.1" width="1.8" height="1.8"/><rect x="64.3" y="429.0" width="1.8" height="1.8"/><rect x="151.1" y="388.5" width="1.8" height="1.8"/><rect x="255.0" y="327.4" width="1.8" height="1.8"/><rect x="305.6" y="356.0" width="1.8" height="1.8"/><rect x="277.3" y="307.3" width="1.8" height="1.8"/><rect x="73.7" y="391.7" width="1.8" height="1.8"/><rect x="305.6" y="310.5" width="1.8" height="1.8"/><rect x="236.7" y="332.2" width="1.8" height="1.8"/><rect x="58.2" y="430.2" width="1.8" height="1.8"/><rect x="320.1" y="316.2" width="1.8" height="1.8"/><rect x="295.6" y="310.9" width="1.8" height="1.8"/><rect x="62.4" y="359.8" width="1.8" height="1.8"/><rect x="198.2" y="342.6" width="1.8" height="1.8"/><rect x="211.2" y="329.6" width="1.8" height="1.8"/><rect x="163.7" y="381.9" width="1.8" height="1.8"/><rect x="289.5" y="349.5" width="1.8" height="1.8"/><rect x="132.9" y="412.3" width="1.8" height="1.8"/><rect x="170.2" y="384.5" width="1.8" height="1.8"/><rect x="82.2" y="351.2" width="1.8" height="1.8"/><rect x="345.2" y="284.3" width="1.8" height="1.8"/><rect x="358.5" y="303.1" width="1.8" height="1.8"/><rect x="109.1" y="400.2" width="1.8" height="1.8"/><rect x="206.5" y="377.9" width="1.8" height="1.8"/><rect x="174.5" y="323.7" width="1.8" height="1.8"/><rect x="155.3" y="386.3" width="1.8" height="1.8"/><rect x="426.0" y="266.2" width="1.8" height="1.8"/><rect x="80.4" y="388.6" width="1.8" height="1.8"/><rect x="67.6" y="364.6" width="1.8" height="1.8"/><rect x="102.1" y="396.9" width="1.8" height="1.8"/><rect x="282.0" y="357.1" width="1.8" height="1.8"/><rect x="130.8" y="346.5" width="1.8" height="1.8"/><rect x="286.0" y="355.7" width="1.8" height="1.8"/><rect x="147.5" y="396.4" width="1.8" height="1.8"/><rect x="178.9" y="344.3" width="1.8" height="1.8"/><rect x="397.0" y="327.2" width="1.8" height="1.8"/><rect x="151.9" y="325.0" width="1.8" height="1.8"/><rect x="267.3" y="341.5" width="1.8" height="1.8"/><rect x="73.2" y="425.6" width="1.8" height="1.8"/><rect x="225.4" y="389.7" width="1.8" height="1.8"/><rect x="78.6" y="411.5" width="1.8" height="1.8"/><rect x="151.7" y="413.6" width="1.8" height="1.8"/><rect x="143.8" y="377.5" width="1.8" height="1.8"/><rect x="76.2" y="356.3" width="1.8" height="1.8"/><rect x="122.9" y="423.3" width="1.8" height="1.8"/><rect x="89.3" y="387.3" width="1.8" height="1.8"/><rect x="306.8" y="316.3" width="1.8" height="1.8"/><rect x="378.5" y="264.2" width="1.8" height="1.8"/><rect x="191.2" y="359.5" width="1.8" height="1.8"/><rect x="169.4" y="315.3" width="1.8" height="1.8"/><rect x="162.5" y="323.0" width="1.8" height="1.8"/><rect x="113.5" y="405.1" width="1.8" height="1.8"/><rect x="228.4" y="341.7" width="1.8" height="1.8"/><rect x="113.3" y="426.4" width="1.8" height="1.8"/><rect x="110.2" y="342.7" width="1.8" height="1.8"/><rect x="118.9" y="366.6" width="1.8" height="1.8"/><rect x="302.9" y="315.3" width="1.8" height="1.8"/><rect x="286.8" y="337.7" width="1.8" height="1.8"/><rect x="137.1" y="378.8" width="1.8" height="1.8"/><rect x="116.6" y="399.7" width="1.8" height="1.8"/><rect x="165.7" y="361.2" width="1.8" height="1.8"/><rect x="283.4" y="353.6" width="1.8" height="1.8"/><rect x="72.2" y="398.7" width="1.8" height="1.8"/><rect x="283.3" y="347.3" width="1.8" height="1.8"/><rect x="144.4" y="349.5" width="1.8" height="1.8"/><rect x="148.6" y="313.7" width="1.8" height="1.8"/><rect x="233.5" y="388.4" width="1.8" height="1.8"/><rect x="165.2" y="387.8" width="1.8" height="1.8"/><rect x="295.1" y="339.1" width="1.8" height="1.8"/><rect x="201.7" y="332.2" width="1.8" height="1.8"/><rect x="298.6" y="355.1" width="1.8" height="1.8"/><rect x="274.7" y="319.8" width="1.8" height="1.8"/><rect x="121.5" y="370.4" width="1.8" height="1.8"/><rect x="334.0" y="277.6" width="1.8" height="1.8"/><rect x="391.0" y="271.5" width="1.8" height="1.8"/><rect x="120.5" y="375.1" width="1.8" height="1.8"/><rect x="240.2" y="336.3" width="1.8" height="1.8"/><rect x="162.3" y="407.6" width="1.8" height="1.8"/><rect x="246.5" y="365.4" width="1.8" height="1.8"/><rect x="290.8" y="337.3" width="1.8" height="1.8"/><rect x="187.1" y="364.0" width="1.8" height="1.8"/><rect x="156.4" y="344.9" width="1.8" height="1.8"/><rect x="92.7" y="391.9" width="1.8" height="1.8"/><rect x="68.2" y="400.9" width="1.8" height="1.8"/><rect x="61.7" y="366.2" width="1.8" height="1.8"/><rect x="150.1" y="363.6" width="1.8" height="1.8"/><rect x="134.7" y="390.8" width="1.8" height="1.8"/><rect x="92.4" y="372.0" width="1.8" height="1.8"/><rect x="233.9" y="364.7" width="1.8" height="1.8"/><rect x="70.3" y="420.8" width="1.8" height="1.8"/><rect x="114.1" y="364.7" width="1.8" height="1.8"/><rect x="153.4" y="388.1" width="1.8" height="1.8"/><rect x="275.2" y="344.5" width="1.8" height="1.8"/><rect x="212.2" y="309.0" width="1.8" height="1.8"/><rect x="180.1" y="361.8" width="1.8" height="1.8"/><rect x="256.0" y="365.9" width="1.8" height="1.8"/><rect x="153.2" y="358.2" width="1.8" height="1.8"/><rect x="271.2" y="366.1" width="1.8" height="1.8"/><rect x="117.5" y="320.7" width="1.8" height="1.8"/><rect x="61.7" y="438.2" width="1.8" height="1.8"/><rect x="83.0" y="361.7" width="1.8" height="1.8"/><rect x="128.7" y="363.8" width="1.8" height="1.8"/><rect x="153.1" y="389.6" width="1.8" height="1.8"/><rect x="223.8" y="311.6" width="1.8" height="1.8"/><rect x="178.9" y="334.4" width="1.8" height="1.8"/><rect x="230.6" y="332.2" width="1.8" height="1.8"/><rect x="259.0" y="356.9" width="1.8" height="1.8"/><rect x="110.1" y="350.0" width="1.8" height="1.8"/><rect x="64.2" y="379.1" width="1.8" height="1.8"/><rect x="126.1" y="379.9" width="1.8" height="1.8"/><rect x="169.3" y="405.5" width="1.8" height="1.8"/><rect x="170.5" y="316.4" width="1.8" height="1.8"/><rect x="74.9" y="392.1" width="1.8" height="1.8"/><rect x="156.2" y="368.7" width="1.8" height="1.8"/><rect x="155.2" y="348.0" width="1.8" height="1.8"/><rect x="313.0" y="341.6" width="1.8" height="1.8"/><rect x="151.7" y="396.6" width="1.8" height="1.8"/><rect x="117.3" y="394.1" width="1.8" height="1.8"/><rect x="212.5" y="367.1" width="1.8" height="1.8"/><rect x="287.5" y="303.9" width="1.8" height="1.8"/><rect x="85.7" y="356.9" width="1.8" height="1.8"/><rect x="316.1" y="334.8" width="1.8" height="1.8"/><rect x="231.5" y="328.2" width="1.8" height="1.8"/><rect x="422.8" y="288.0" width="1.8" height="1.8"/><rect x="319.3" y="356.1" width="1.8" height="1.8"/><rect x="168.4" y="343.7" width="1.8" height="1.8"/><rect x="93.4" y="406.6" width="1.8" height="1.8"/><rect x="260.4" y="328.8" width="1.8" height="1.8"/><rect x="98.0" y="415.0" width="1.8" height="1.8"/><rect x="242.6" y="351.0" width="1.8" height="1.8"/><rect x="73.1" y="375.7" width="1.8" height="1.8"/><rect x="169.8" y="419.4" width="1.8" height="1.8"/><rect x="322.0" y="324.2" width="1.8" height="1.8"/><rect x="190.4" y="362.3" width="1.8" height="1.8"/><rect x="78.2" y="420.9" width="1.8" height="1.8"/><rect x="210.7" y="369.8" width="1.8" height="1.8"/><rect x="87.6" y="374.7" width="1.8" height="1.8"/><rect x="255.6" y="343.2" width="1.8" height="1.8"/><rect x="71.7" y="376.8" width="1.8" height="1.8"/><rect x="254.6" y="376.6" width="1.8" height="1.8"/><rect x="72.8" y="414.6" width="1.8" height="1.8"/></g><polyline points="57.3,197.6 58.2,197.8 59.2,196.6 60.4,200.0 61.6,200.4 62.5,201.2 63.5,198.5 64.9,204.0 66.3,204.2 67.3,206.6 68.2,208.6 69.2,207.0 69.7,205.1 70.1,208.9 70.3,218.1 70.5,227.8 72.0,290.0 73.9,212.7 75.2,217.3 76.4,217.4 77.7,218.4 78.7,223.6 79.6,224.0 81.5,273.0 83.4,218.4 84.3,210.4 85.2,207.0 86.2,207.4 87.1,206.7 88.1,208.9 89.0,211.1 90.0,213.1 90.9,214.6 91.9,215.5 92.8,220.5 93.8,226.0 94.7,216.1 95.6,208.9 96.5,217.9 97.5,222.0 98.5,222.4 99.4,217.6 100.4,218.4 101.8,224.9 103.2,227.8 104.2,223.7 105.1,224.0 106.0,227.6 107.0,229.7 108.4,223.6 109.8,222.0 110.8,220.3 111.7,226.9 112.7,226.0 113.9,221.1 115.2,218.0 116.4,216.5 117.4,227.2 118.3,234.4 119.3,240.0 120.7,231.7 122.1,226.0 123.0,232.5 124.0,233.5 125.3,230.2 126.5,227.6 127.8,223.0 129.2,230.2 130.6,241.0 131.9,236.7 133.1,228.3 134.4,220.2 135.7,229.3 136.9,235.1 138.2,239.0 139.3,234.2 140.4,231.0 141.6,226.3 142.7,222.6 143.8,221.2 145.1,222.6 146.5,227.9 147.8,233.7 149.2,234.1 150.5,241.0 151.6,242.9 152.7,241.7 153.8,243.5 155.0,242.6 156.2,245.9 157.3,244.1 158.5,244.4 159.6,243.5 160.8,244.7 161.9,246.2 163.1,242.5 164.2,245.4 165.5,251.4 166.7,248.8 168.0,254.8 169.2,251.1 170.3,246.5 171.5,236.3 172.7,234.0 173.9,240.0 175.1,241.7 176.2,247.2 177.4,251.0 178.7,243.4 179.9,238.9 181.2,236.9 182.5,241.0 183.7,251.6 185.0,254.8 185.9,245.4 186.9,241.2 187.8,232.1 189.2,245.6 190.6,253.9 191.6,252.5 192.5,244.8 193.5,241.6 194.8,243.6 196.0,247.4 197.3,250.1 198.5,255.8 199.7,255.8 200.8,263.7 202.0,266.2 202.9,262.3 203.9,257.0 204.8,249.1 205.8,248.9 206.7,256.8 207.7,256.7 208.9,251.1 210.2,249.5 211.4,247.3 212.7,252.4 213.9,258.6 215.2,260.5 216.5,257.6 217.7,259.2 219.0,254.8 220.3,260.4 221.5,264.4 222.8,270.9 224.1,264.4 225.3,258.2 226.6,254.8 228.0,250.8 229.4,249.8 230.8,251.7 232.2,249.1 233.4,257.8 234.6,258.4 235.8,263.4 237.0,271.8 238.4,277.1 239.8,276.8 241.2,278.4 242.6,281.3 243.8,274.0 245.0,270.5 246.2,266.2 247.4,258.6 248.5,260.6 249.6,262.7 250.7,265.4 251.6,266.8 252.6,276.1 253.5,277.7 254.4,268.3 255.4,264.4 256.3,257.8 257.6,264.2 258.8,264.4 260.1,271.0 261.1,271.2 262.0,271.2 263.0,267.3 263.9,274.7 264.9,282.2 265.8,287.1 266.7,279.4 267.7,276.0 268.6,271.0 269.6,274.6 270.5,284.4 271.5,288.0 272.4,281.7 273.4,277.7 274.3,272.9 275.2,273.4 276.2,270.0 277.1,265.4 280.0,299.4 282.8,269.1 283.7,273.9 284.7,272.6 285.6,274.8 286.6,280.4 287.5,287.5 288.5,291.8 289.4,288.5 290.4,284.3 291.3,282.4 293.3,337.2 295.1,280.5 296.5,280.9 297.9,282.4 298.9,284.0 299.8,289.2 300.8,293.7 302.0,292.9 303.3,288.9 304.5,282.4 305.5,287.6 306.4,291.2 307.4,295.6 308.3,289.0 309.3,281.8 310.2,278.6 311.5,281.6 312.7,289.1 314.0,291.8 315.3,291.8 316.5,286.6 317.8,285.2 319.1,290.1 320.3,293.2 321.6,294.7 322.8,294.9 324.1,293.8 325.3,291.8 326.5,295.7 327.7,295.7 328.9,300.2 330.1,301.3 331.3,298.7 332.6,298.7 333.8,297.5 335.1,302.9 336.3,306.2 337.6,308.8 338.9,303.2 340.1,302.7 341.4,295.6 342.2,297.6 343.1,297.8 344.1,302.4 345.2,306.1 346.2,300.4 347.3,300.8 348.3,297.8 349.4,299.4 350.4,304.0 351.4,309.2 352.5,312.4 353.6,317.4 354.6,322.8 356.0,319.5 357.3,313.3 358.7,307.2 360.1,312.1 361.5,312.5 362.9,316.5 364.3,316.0 365.6,315.2 367.0,312.4 368.4,313.0 369.8,308.7 371.2,308.2 372.2,311.7 373.3,313.2 374.3,312.4 377.4,351.9 379.5,316.5 380.5,321.8 381.6,327.7 382.6,329.0 383.6,325.5 384.7,316.5 385.7,322.2 386.8,327.8 387.8,333.2 388.8,327.0 389.9,326.9 390.9,320.7 392.2,323.6 393.5,321.0 394.7,322.6 396.0,323.0 397.3,321.9 398.2,324.2 399.2,321.8 400.1,324.7 401.2,325.3 402.4,322.5 403.2,326.9 404.1,330.4 405.2,337.0 406.3,341.7 407.5,336.7 408.6,332.7 410.0,332.8 411.4,331.5 412.5,335.1 413.7,335.5 414.6,339.9 415.6,344.0 416.5,346.3 417.5,341.4 418.4,340.1 419.4,340.0 420.5,340.5 421.6,341.7 422.8,349.5 423.9,355.4 424.8,346.9 425.6,341.7 426.7,343.2 427.9,343.3 429.0,342.9 430.1,339.0 431.3,340.6 432.4,342.1 433.5,344.0 434.1,341.2 434.7,341.7 435.9,343.0 437.0,349.7 438.1,350.5 439.3,354.7 440.4,358.8 441.5,356.3 442.6,357.6 443.8,357.8 444.9,361.6" fill="none" stroke="#3aa8e0" stroke-width="1.3" stroke-linejoin="round"/></svg>
<div class="a t" style="left:39.62px;top:441.99px;font-size:10.5px;color:#222;">10</div>
<div class="a t" style="left:39.62px;top:407.86px;font-size:10.5px;color:#222;">20</div>
<div class="a t" style="left:39.62px;top:373.74px;font-size:10.5px;color:#222;">30</div>
<div class="a t" style="left:39.62px;top:339.61px;font-size:10.5px;color:#222;">40</div>
<div class="a t" style="left:39.62px;top:305.49px;font-size:10.5px;color:#222;">50</div>
<div class="a t" style="left:39.62px;top:271.36px;font-size:10.5px;color:#222;">60</div>
<div class="a t" style="left:39.62px;top:237.24px;font-size:10.5px;color:#222;">70</div>
<div class="a t" style="left:39.62px;top:203.11px;font-size:10.5px;color:#222;">80</div>
<div class="a t" style="left:39.62px;top:168.99px;font-size:10.5px;color:#222;">90</div>
<div class="a t" style="left:451.30px;top:441.99px;font-size:10.5px;color:#222;">5</div>
<div class="a t" style="left:451.30px;top:407.86px;font-size:10.5px;color:#222;">10</div>
<div class="a t" style="left:451.30px;top:373.74px;font-size:10.5px;color:#222;">15</div>
<div class="a t" style="left:451.30px;top:339.61px;font-size:10.5px;color:#222;">20</div>
<div class="a t" style="left:451.30px;top:305.49px;font-size:10.5px;color:#222;">25</div>
<div class="a t" style="left:451.30px;top:271.36px;font-size:10.5px;color:#222;">30</div>
<div class="a t" style="left:451.30px;top:237.24px;font-size:10.5px;color:#222;">35</div>
<div class="a t" style="left:451.30px;top:203.11px;font-size:10.5px;color:#222;">40</div>
<div class="a t" style="left:451.30px;top:168.99px;font-size:10.5px;color:#222;">45</div>
<div class="a t" style="left:57.30px;top:162.81px;font-size:10.5px;color:#222;transform:scaleX(0.9783);transform-origin:0 0;">MB/s</div>
<div class="a t" style="left:432.00px;top:162.81px;font-size:10.5px;color:#222;transform:scaleX(0.9073);transform-origin:0 0;">ms</div>
<div class="a t" style="left:53.83px;top:488.41px;font-size:10.5px;color:#222;">0</div>
<div class="a t" style="left:89.83px;top:488.41px;font-size:10.5px;color:#222;">50</div>
<div class="a t" style="left:125.83px;top:488.41px;font-size:10.5px;color:#222;">100</div>
<div class="a t" style="left:164.75px;top:488.41px;font-size:10.5px;color:#222;">150</div>
<div class="a t" style="left:203.67px;top:488.41px;font-size:10.5px;color:#222;">200</div>
<div class="a t" style="left:242.59px;top:488.41px;font-size:10.5px;color:#222;">250</div>
<div class="a t" style="left:281.51px;top:488.41px;font-size:10.5px;color:#222;">300</div>
<div class="a t" style="left:320.43px;top:488.41px;font-size:10.5px;color:#222;">350</div>
<div class="a t" style="left:359.35px;top:488.41px;font-size:10.5px;color:#222;">400</div>
<div class="a t" style="left:398.27px;top:488.41px;font-size:10.5px;color:#222;">450</div>
<div class="a t" style="left:430.00px;top:488.41px;font-size:10.5px;color:#222;transform:scaleX(0.9880);transform-origin:0 0;">500gB</div>
<div class="a t" style="left:60.00px;top:176.31px;font-size:10.5px;color:#a8a8a8;transform:scaleX(1.0431);transform-origin:0 0;">trial version</div>
<div class="a" style="left:485px;top:155px;width:73px;height:22px;border:2px solid #3c9cd4;border-radius:4px;background:linear-gradient(180deg,#f4f4f4 0%,#ececec 45%,#dcdcdc 55%,#d2d2d2 100%)"></div>
<div class="a" style="left:487px;top:157px;width:69px;height:18px;border:1px solid #a8dcf4;border-radius:2px"></div>
<div class="a t" style="left:509.70px;top:160.69px;font-size:11px;color:#000;transform:scaleX(0.8868);transform-origin:0 0;">Start</div>
<div class="a" style="left:476px;top:185px;width:100px;height:2px;border-top:1px solid #a0a0a0;border-bottom:1px solid #fff"></div>
<svg class="a" style="left:480px;top:192px;" width="14" height="30" viewBox="0 0 14 30"><circle cx="6.5" cy="7" r="5.5" fill="#f0f0f0" stroke="#8a8a8a"/><circle cx="6.5" cy="7" r="3" fill="#0e5a8c"/><circle cx="6.8" cy="7.4" r="1.2" fill="#40b8e8"/><circle cx="6.5" cy="23" r="5.5" fill="#eee" stroke="#aaa"/></svg>
<div class="a t" style="left:496.70px;top:193.99px;font-size:11px;color:#000;transform:scaleX(0.9507);transform-origin:0 0;">Read</div>
<div class="a t" style="left:496.70px;top:209.89px;font-size:11px;color:#000;transform:scaleX(0.9150);transform-origin:0 0;">Write</div>
<div class="a" style="left:476px;top:225px;width:100px;height:2px;border-top:1px solid #a0a0a0;border-bottom:1px solid #fff"></div>
<div class="a" style="left:480px;top:233px;width:13px;height:13px;border:1px solid #8e8f8f;background:linear-gradient(135deg,#dcdcdc,#fafafa)"></div>
<div class="a t" style="left:497.00px;top:234.29px;font-size:11px;color:#000;transform:scaleX(0.9274);transform-origin:0 0;">Short stroke</div>
<div class="a" style="left:480px;top:253px;width:62px;height:20px;border:1px solid #bcbcbc;border-radius:2px;background:#fff"></div>
<div class="a t" style="left:483.60px;top:257.69px;font-size:11px;color:#8a8a8a;transform:scaleX(0.8990);transform-origin:0 0;">40</div>
<div class="a" style="left:526px;top:256px;width:15px;height:8px;border:1px solid #d0d0d0;background:#f4f4f4"></div>
<div class="a" style="left:526px;top:264px;width:15px;height:8px;border:1px solid #d0d0d0;background:#f4f4f4"></div>
<svg class="a" style="left:531px;top:258px;" width="6" height="4" viewBox="0 0 6 4"><path d="M0.5 3.5 L3 0.5 L5.5 3.5 Z" fill="#a0a0a0"/></svg>
<svg class="a" style="left:531px;top:266px;" width="6" height="4" viewBox="0 0 6 4"><path d="M0.5 0.5 L3 3.5 L5.5 0.5 Z" fill="#a0a0a0"/></svg>
<div class="a t" style="left:553.00px;top:257.09px;font-size:11px;color:#000;transform:scaleX(0.9364);transform-origin:0 0;">gB</div>
<div class="a" style="left:480px;top:282px;width:13px;height:13px;border:1px solid #8e8f8f;background:linear-gradient(135deg,#dcdcdc,#fafafa)"></div>
<svg class="a" style="left:481px;top:283px;" width="11" height="11" viewBox="0 0 11 11"><path d="M2 5.5 L4.5 9 L9.5 1.5" stroke="#203f8a" stroke-width="2" fill="none"/></svg>
<div class="a t" style="left:497.60px;top:282.69px;font-size:11px;color:#000;transform:scaleX(0.9271);transform-origin:0 0;">Transfer rate</div>
<div class="a" style="left:476px;top:296px;width:100px;height:2px;border-top:1px solid #a0a0a0;border-bottom:1px solid #fff"></div>
<div class="a t" style="left:481.00px;top:301.69px;font-size:11px;color:#000;transform:scaleX(0.8966);transform-origin:0 0;">Minimum</div>
<div class="a" style="left:481px;top:315px;width:91px;height:14px;background:#000"></div>
<div class="a t" style="left:497.80px;top:316.24px;font-size:12px;font-weight:bold;-webkit-text-stroke:0;color:#2aaaee;transform:scaleX(1.0477);transform-origin:0 0;">34.8 MB/s</div>
<div class="a t" style="left:481.00px;top:334.69px;font-size:11px;color:#000;transform:scaleX(0.9020);transform-origin:0 0;">Maximum</div>
<div class="a" style="left:481px;top:348px;width:91px;height:14px;background:#000"></div>
<div class="a t" style="left:497.80px;top:349.24px;font-size:12px;font-weight:bold;-webkit-text-stroke:0;color:#2aaaee;transform:scaleX(1.0477);transform-origin:0 0;">83.9 MB/s</div>
<div class="a t" style="left:481.00px;top:364.69px;font-size:11px;color:#000;transform:scaleX(0.9320);transform-origin:0 0;">Average</div>
<div class="a" style="left:481px;top:378px;width:91px;height:14px;background:#000"></div>
<div class="a t" style="left:497.80px;top:379.24px;font-size:12px;font-weight:bold;-webkit-text-stroke:0;color:#2aaaee;transform:scaleX(1.0477);transform-origin:0 0;">60.8 MB/s</div>
<div class="a" style="left:476px;top:400px;width:100px;height:2px;border-top:1px solid #a0a0a0;border-bottom:1px solid #fff"></div>
<div class="a" style="left:480px;top:407px;width:13px;height:13px;border:1px solid #8e8f8f;background:linear-gradient(135deg,#dcdcdc,#fafafa)"></div>
<svg class="a" style="left:481px;top:408px;" width="11" height="11" viewBox="0 0 11 11"><path d="M2 5.5 L4.5 9 L9.5 1.5" stroke="#203f8a" stroke-width="2" fill="none"/></svg>
<div class="a t" style="left:496.80px;top:407.89px;font-size:11px;color:#000;transform:scaleX(0.9242);transform-origin:0 0;">Access time</div>
<div class="a" style="left:481px;top:422px;width:91px;height:14px;background:#000"></div>
<div class="a t" style="left:505.80px;top:423.24px;font-size:12px;font-weight:bold;-webkit-text-stroke:0;color:#f0f020;transform:scaleX(0.9538);transform-origin:0 0;">18.1 ms</div>
<div class="a" style="left:480px;top:441px;width:13px;height:13px;border:1px solid #8e8f8f;background:linear-gradient(135deg,#dcdcdc,#fafafa)"></div>
<svg class="a" style="left:481px;top:442px;" width="11" height="11" viewBox="0 0 11 11"><path d="M2 5.5 L4.5 9 L9.5 1.5" stroke="#203f8a" stroke-width="2" fill="none"/></svg>
<div class="a t" style="left:496.80px;top:441.49px;font-size:11px;color:#000;transform:scaleX(0.9437);transform-origin:0 0;">Burst rate</div>
<div class="a" style="left:481px;top:456px;width:91px;height:14px;background:#000"></div>
<div class="a t" style="left:493.90px;top:457.24px;font-size:12px;font-weight:bold;-webkit-text-stroke:0;color:#fff;transform:scaleX(1.0607);transform-origin:0 0;">161.3 MB/s</div>
<div class="a t" style="left:480.20px;top:474.79px;font-size:11px;color:#000;transform:scaleX(0.9386);transform-origin:0 0;">CPU usage</div>
<div class="a" style="left:481px;top:489px;width:91px;height:14px;background:#000"></div>
<div class="a t" style="left:513.15px;top:490.24px;font-size:12px;font-weight:bold;-webkit-text-stroke:0;color:#fff;">3.2%</div>
</body></html>
